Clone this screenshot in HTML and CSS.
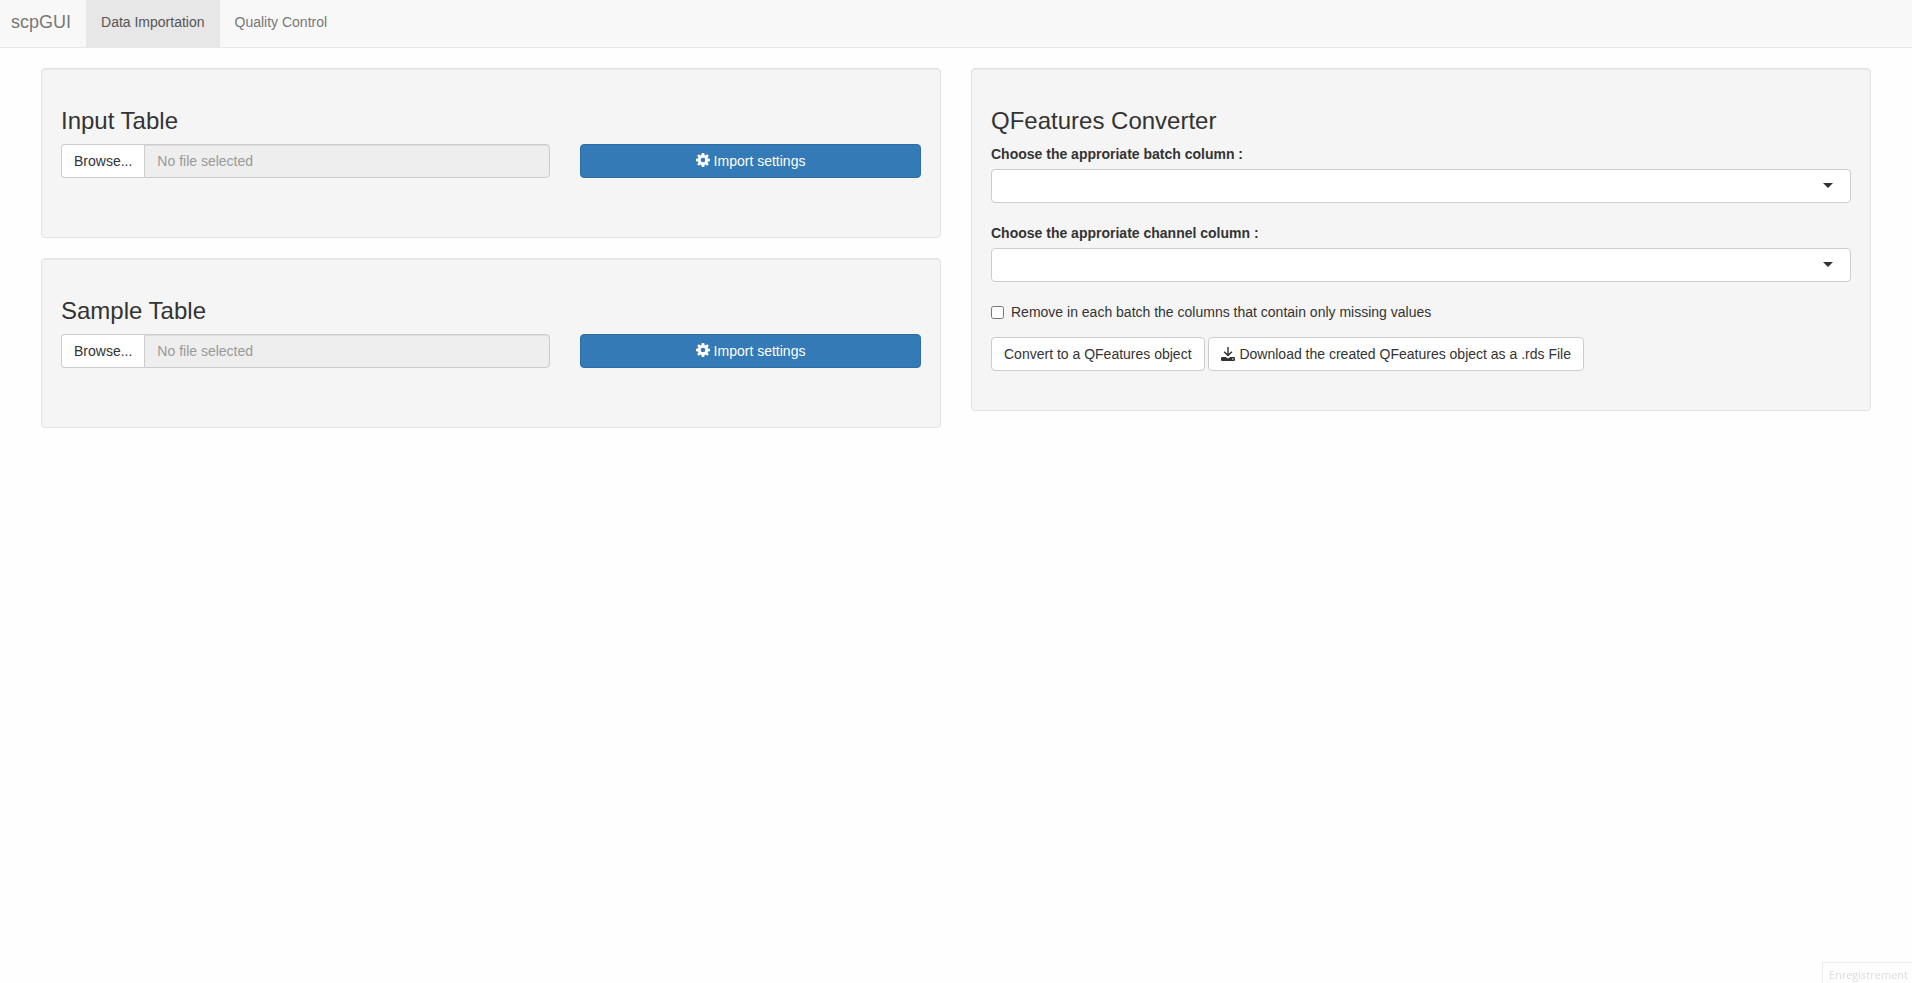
FILE: index.html
```html
<!DOCTYPE html>
<html lang="en">
<head>
<meta charset="utf-8">
<meta name="viewport" content="width=device-width, initial-scale=1">
<title>scpGUI</title>
<link rel="stylesheet" href="styles.css">
</head>
<body>
<svg class="sprite" aria-hidden="true">
  <symbol id="icon-cog" viewBox="0 0 14 14">
    <path fill-rule="evenodd" d="M5.8 0h2.4l.4 2 .8.4L11.200 1.200l1.600 1.600L11.600 4.600l.4.8 2 .4v2.400l-2 .4-.4.8 1.200 1.800-1.600 1.600-1.800-1.200-.8.4-.4 2H5.800l-.4-2-.8-.4-1.800 1.200-1.600-1.600L2.400 9.400 2 8.600l-2-.4V5.800l2-.4.4-.8L1.200 2.800l1.600-1.600 1.800 1.200.8-.4zM7 4.700a2.300 2.300 0 1 0 0 4.600 2.300 2.300 0 0 0 0-4.600z"/>
  </symbol>
  <symbol id="icon-download" viewBox="0 0 14 14">
    <path fill-rule="evenodd" d="M6.300 0h1.400v6.800L10.400 4.300l1 1L7 9.400 2.600 5.300l1-1 2.700 2.500zM1.200 10H4.600L7 11.400 9.400 10h3.400a1.200 1.200 0 0 1 1.200 1.200v1.600a1.200 1.200 0 0 1-1.200 1.200H1.200A1.200 1.200 0 0 1 0 12.800v-1.600A1.200 1.200 0 0 1 1.200 10zM11.800 11.300a.7.7 0 1 0 0 1.400.7.7 0 0 0 0-1.400z"/>
  </symbol>
</svg>

<nav class="navbar">
  <a class="brand" href="#">scpGUI</a>
  <a class="tab tab-active" href="#import" aria-current="page">Data Importation</a>
  <a class="tab" href="#quality">Quality Control</a>
</nav>

<main class="layout">
  <div class="column">
    <section class="well">
      <h3 class="title">Input Table</h3>
      <div class="import-row">
        <div class="file-group">
          <label class="btn file-browse">Browse...<input class="file-native" type="file"></label>
          <input class="file-name" type="text" placeholder="No file selected" aria-label="Input table file" readonly>
        </div>
        <button class="btn btn-primary" type="button"><svg class="icon" aria-hidden="true"><use href="#icon-cog"/></svg> Import settings</button>
      </div>
    </section>
    <section class="well">
      <h3 class="title">Sample Table</h3>
      <div class="import-row">
        <div class="file-group">
          <label class="btn file-browse">Browse...<input class="file-native" type="file"></label>
          <input class="file-name" type="text" placeholder="No file selected" aria-label="Sample table file" readonly>
        </div>
        <button class="btn btn-primary" type="button"><svg class="icon" aria-hidden="true"><use href="#icon-cog"/></svg> Import settings</button>
      </div>
    </section>
  </div>

  <div class="column">
    <section class="well">
      <h3 class="title">QFeatures Converter</h3>
      <div class="field">
        <label class="field-label" for="batch">Choose the approriate batch column :</label>
        <div class="select-wrap"><select class="select" id="batch"><option></option></select></div>
      </div>
      <div class="field">
        <label class="field-label" for="channel">Choose the approriate channel column :</label>
        <div class="select-wrap"><select class="select" id="channel"><option></option></select></div>
      </div>
      <label class="check"><input class="check-box" type="checkbox">Remove in each batch the columns that contain only missing values</label>
      <div class="actions">
        <button class="btn" type="button">Convert to a QFeatures object</button>
        <button class="btn" type="button"><svg class="icon icon-download" aria-hidden="true"><use href="#icon-download"/></svg> Download the created QFeatures object as a .rds File</button>
      </div>
    </section>
  </div>
</main>

<div class="toast">Enregistrement</div>
</body>
</html>
```
FILE: styles.css
```css
* {
  box-sizing: border-box;
}

body {
  margin: 0;
  background: #fefefe;
  color: #333;
  font: 14px/20px "Liberation Sans", Arial, sans-serif;
}

.sprite {
  display: none;
}

.navbar {
  display: flex;
  background: #f8f8f8;
  border-bottom: 1px solid #e7e7e7;
}

.brand,
.tab {
  padding: 12px 15px 15px;
  color: #777;
  text-decoration: none;
}

.brand {
  padding-left: 11px;
  font-size: 18px;
}

.tab-active {
  background: #e7e7e7;
  color: #555;
}

.layout {
  display: grid;
  grid-template-columns: repeat(2, minmax(0, 1fr));
  gap: 30px;
  align-items: start;
  padding: 20px 41px;
}

.column {
  display: grid;
  gap: 20px;
}

.well {
  padding: 39px 19px;
  background: #f5f5f5;
  border: 1px solid #e3e3e3;
  border-radius: 4px;
  box-shadow: inset 0 1px 1px rgba(0, 0, 0, 0.05);
}

.title {
  margin: 0 0 10px;
  font-size: 24px;
  font-weight: 500;
  line-height: 26px;
}

.import-row {
  display: grid;
  grid-template-columns: repeat(12, minmax(0, 1fr));
  column-gap: 30px;
  padding-bottom: 20px;
}

.file-group {
  display: flex;
  grid-column: span 7;
}

.btn {
  padding: 6px 12px;
  background: #fff;
  border: 1px solid #ccc;
  border-radius: 4px;
  color: #333;
  font: inherit;
  text-align: center;
  white-space: nowrap;
  cursor: pointer;
}

.btn-primary {
  grid-column: span 5;
  background: #337ab7;
  border-color: #2e6da4;
  color: #fff;
}

.file-browse {
  border-right: 0;
  border-radius: 4px 0 0 4px;
}

.file-native {
  position: absolute;
  width: 1px;
  height: 1px;
  opacity: 0;
  pointer-events: none;
}

.file-name {
  flex: 1;
  min-width: 0;
  padding: 6px 12px;
  background: #eee;
  border: 1px solid #ccc;
  border-radius: 0 4px 4px 0;
  box-shadow: inset 0 1px 1px rgba(0, 0, 0, 0.075);
  color: #555;
  font: inherit;
}

.file-name::placeholder {
  color: #999;
  opacity: 1;
}

.icon {
  width: 14px;
  height: 14px;
  fill: currentColor;
  vertical-align: -1px;
}

.icon-download {
  margin-right: 1px;
  vertical-align: -2px;
}

.field {
  margin-bottom: 20px;
}

.field-label {
  display: block;
  margin-bottom: 5px;
  font-weight: 700;
}

.select-wrap {
  position: relative;
}

.select-wrap::after {
  content: "";
  position: absolute;
  top: 14px;
  right: 18px;
  border: 5px solid transparent;
  border-top-color: #333;
  border-bottom: 0;
  pointer-events: none;
}

.select {
  display: block;
  width: 100%;
  height: 34px;
  padding: 6px 12px;
  appearance: none;
  background: #fff;
  border: 1px solid #ccc;
  border-radius: 4px;
  color: #333;
  font: inherit;
}

.check {
  display: flex;
  align-items: center;
  gap: 7px;
  margin-bottom: 15px;
}

.check-box {
  width: 13px;
  height: 13px;
  margin: 0;
}

.actions {
  display: flex;
  flex-wrap: wrap;
  gap: 3px;
}

.toast {
  position: fixed;
  right: 0;
  bottom: 0;
  padding: 4px 4px 0 6px;
  border: 1px solid #eee;
  border-width: 1px 0 0 1px;
  color: #dcdcdc;
  font: 11px/16px "Open Sans", "Noto Sans", sans-serif;
}
```
